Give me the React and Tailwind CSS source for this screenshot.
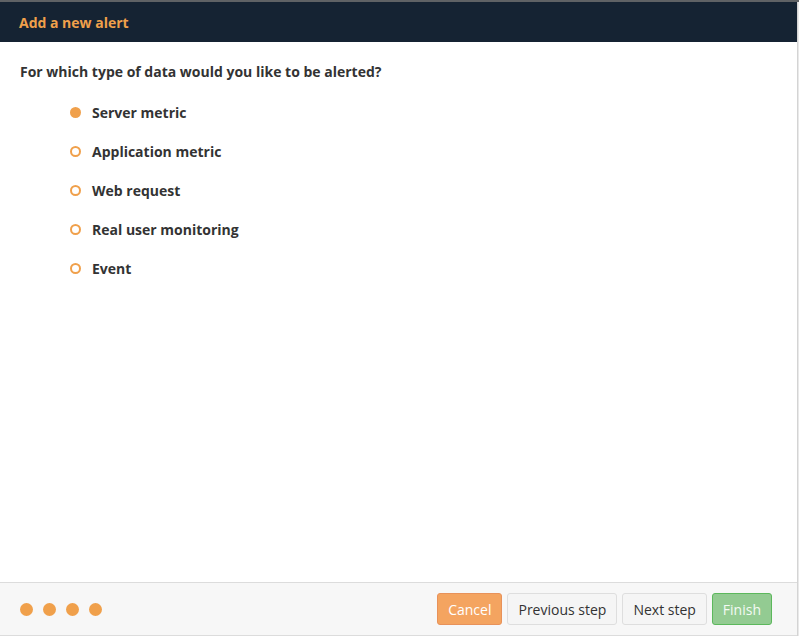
const options = [
  "Server metric",
  "Application metric",
  "Web request",
  "Real user monitoring",
  "Event",
];

const Radio = ({ checked }) =>
  checked ? (
    <span className="block w-[11px] h-[11px] rounded-full bg-[#f0a04b]" />
  ) : (
    <span className="block w-[11px] h-[11px] rounded-full border-2 border-[#f0a04b] bg-white" />
  );

const App = () => {
  return (
    <div
      className="w-[799px] h-[636px] flex flex-col bg-[#e9e9e9] overflow-hidden"
      style={{ fontFamily: '"Open Sans", sans-serif' }}
    >
      {/* strip of the page behind the modal */}
      <div className="h-[2px] bg-[#5f6265] shrink-0" />

      <div className="flex-1 flex flex-col w-[798px] border-r border-[#d4d4d4] bg-white">
        {/* Header */}
        <div className="h-10 shrink-0 flex items-center px-[19px] bg-[#152333]">
          <h1 className="text-[14px] font-bold text-[#f0a04b]">Add a new alert</h1>
        </div>

        {/* Body */}
        <div className="flex-1 px-5 pt-5">
          <p className="text-[14px] leading-5 font-bold text-[#333]">
            For which type of data would you like to be alerted?
          </p>
          <ul className="mt-[11px] pl-[50px]">
            {options.map((label, i) => (
              <li key={label} className="h-[39px] flex items-center gap-[11px]">
                <Radio checked={i === 0} />
                <span className="text-[14px] font-bold text-[#333]">{label}</span>
              </li>
            ))}
          </ul>
        </div>

        {/* Footer */}
        <div className="h-[54px] shrink-0 flex items-center justify-between pl-5 pr-[25px] bg-[#f7f7f7] border-y border-[#dcdcdc]">
          <div className="flex items-center gap-[10px]">
            {[0, 1, 2, 3].map((d) => (
              <span key={d} className="block w-[13px] h-[13px] rounded-full bg-[#f0a04b]" />
            ))}
          </div>
          <div className="flex items-center gap-[5px] text-[14px]">
            <button className="h-8 px-[10px] rounded-[3px] border border-[#e8925a] bg-[#f4a460] text-white">
              Cancel
            </button>
            <button className="h-8 px-[10px] rounded-[3px] border border-[#dedede] bg-[#f5f5f5] text-[#333]">
              Previous step
            </button>
            <button className="h-8 px-[10px] rounded-[3px] border border-[#dedede] bg-[#f5f5f5] text-[#333]">
              Next step
            </button>
            <button className="h-8 px-[10px] rounded-[3px] border border-[#5cb85c] bg-[#93cb92] text-[#f4faf4]">
              Finish
            </button>
          </div>
        </div>
      </div>
    </div>
  );
};

export default App;
